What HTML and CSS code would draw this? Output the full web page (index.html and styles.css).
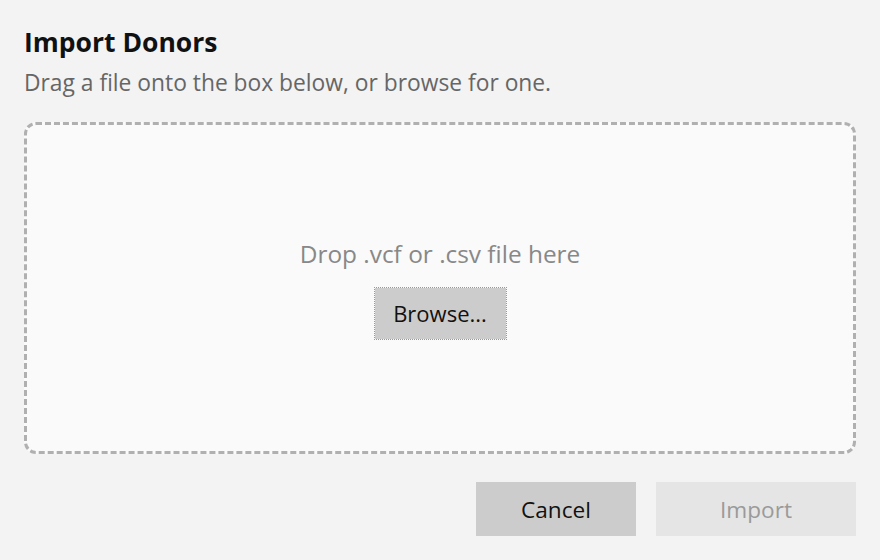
FILE: index.html
```html
<!DOCTYPE html>
<html lang="en">
<head>
<meta charset="utf-8">
<title>Import Donors</title>
<link rel="stylesheet" href="styles.css">
</head>
<body>
<div class="dialog">
  <h1 class="title">Import Donors</h1>
  <p class="subtitle">Drag a file onto the box below, or browse for one.</p>
  <div class="dropzone">
    <div class="drop-text">Drop .vcf or .csv file here</div>
    <button class="browse" type="button">Browse...</button>
  </div>
  <div class="actions">
    <button class="btn cancel" type="button">Cancel</button>
    <button class="btn import" type="button" disabled>Import</button>
  </div>
</div>
</body>
</html>
```
FILE: styles.css
```css
html, body {
  margin: 0;
  padding: 0;
  background: #f3f3f3;
}
body {
  font-family: "Open Sans", "Noto Sans", "Liberation Sans", sans-serif;
  color: #111;
}
.dialog {
  width: 880px;
  height: 560px;
  box-sizing: border-box;
  padding: 24px 24px 24px 24px;
  display: flex;
  flex-direction: column;
}
.title {
  margin: 0;
  font-size: 26.5px;
  font-weight: 700;
  line-height: 36px;
  color: #111;
}
.subtitle {
  margin: 7px 0 0 0;
  font-size: 22.8px;
  line-height: 32px;
  color: #666;
}
.dropzone {
  margin-top: 23px;
  height: 332px;
  box-sizing: border-box;
  border: 3px dashed #b0b0b0;
  border-radius: 12px;
  background: #fafafa;
  display: flex;
  flex-direction: column;
  align-items: center;
  justify-content: center;
  gap: 16px;
}
.drop-text {
  font-size: 24.4px;
  line-height: 34px;
  color: #888;
}
.browse {
  font-family: inherit;
  font-size: 22px;
  color: #111;
  background: #cccccc;
  background-clip: padding-box;
  border: 1px dotted #9a9a9a;
  width: 133px;
  height: 53px;
  padding: 0;
}
.actions {
  margin-top: 28px;
  display: flex;
  justify-content: flex-end;
  gap: 20px;
}
.btn {
  font-family: inherit;
  font-size: 22.6px;
  border: none;
  height: 54px;
  padding: 0;
}
.cancel {
  width: 160px;
  background: #cccccc;
  color: #111;
}
.import {
  width: 200px;
  background: #e5e5e5;
  color: #9a9a9a;
}
```
